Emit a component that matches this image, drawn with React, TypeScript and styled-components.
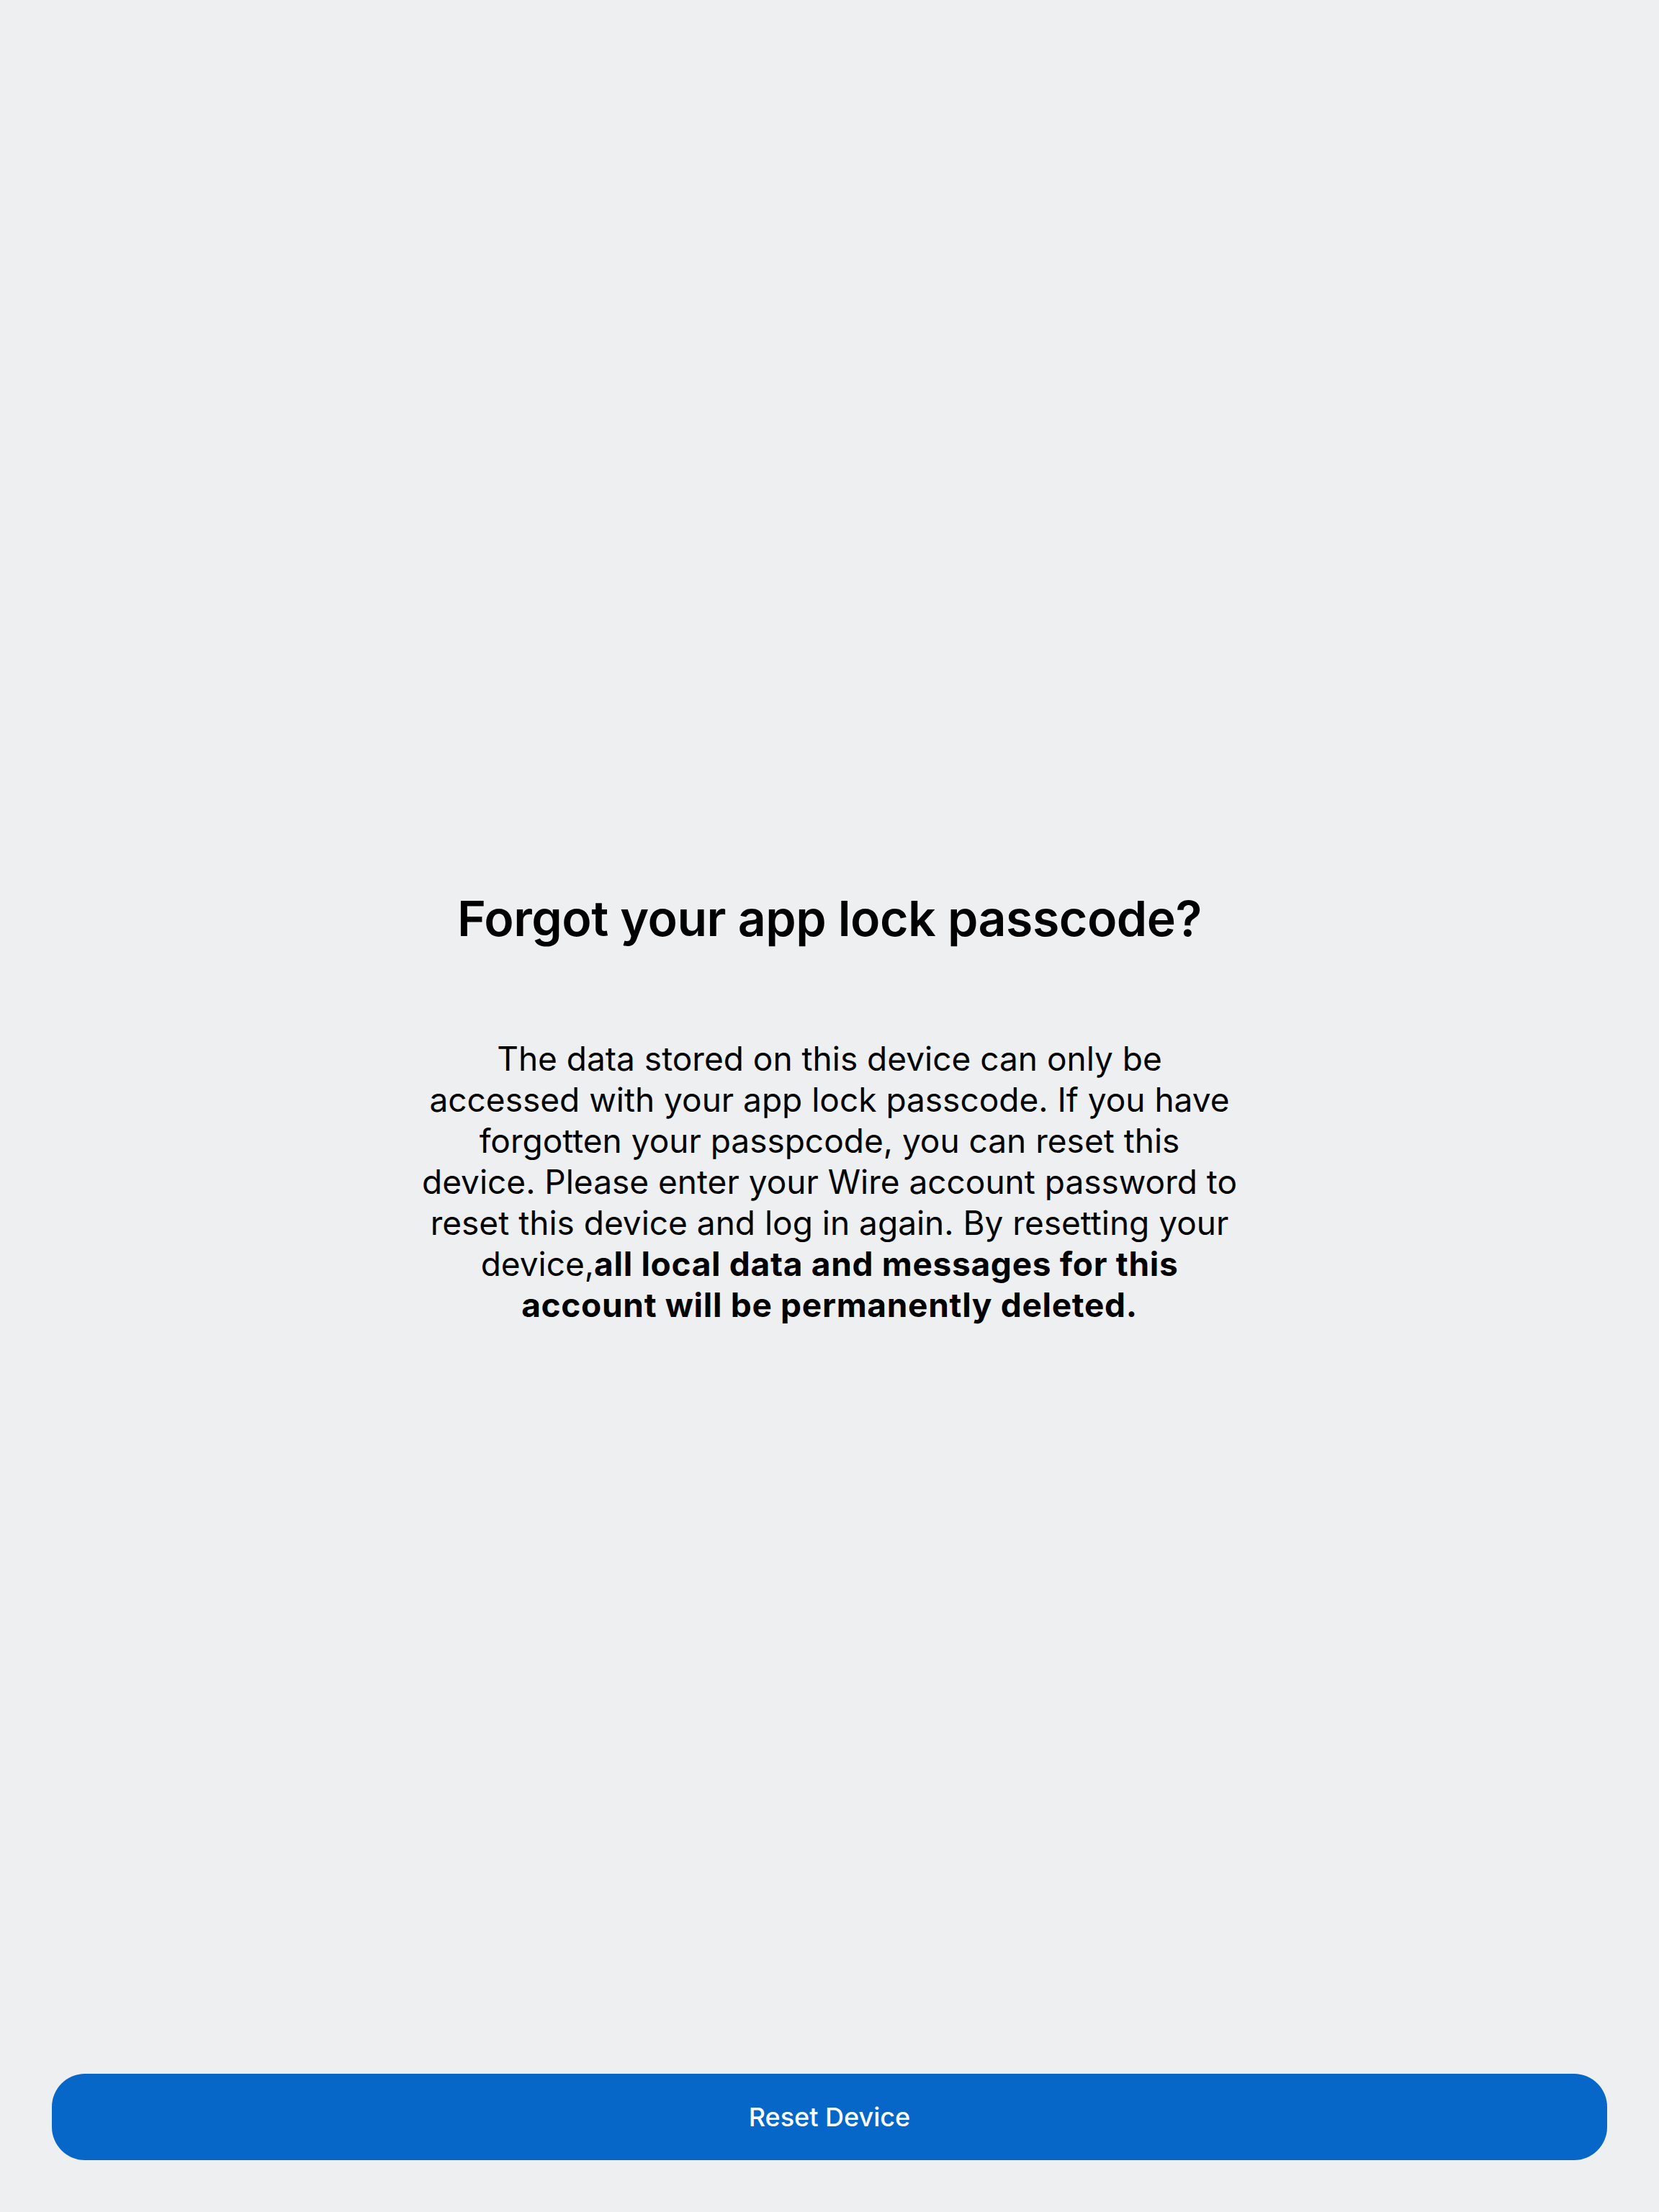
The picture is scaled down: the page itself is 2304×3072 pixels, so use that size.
import React from "react";
import styled, { createGlobalStyle } from "styled-components";

const GlobalStyle = createGlobalStyle`
  html, body {
    margin: 0;
    padding: 0;
    background: #eeeff1;
  }
  * {
    box-sizing: border-box;
  }
`;

const Screen = styled.div`
  min-height: 3072px;
  display: flex;
  flex-direction: column;
  background: #eeeff1;
  font-family: Inter, "Noto Sans", sans-serif;
  color: #000;
`;

const Content = styled.main`
  flex: 1;
  display: flex;
  flex-direction: column;
  align-items: center;
  padding-top: 1233px;
`;

const Title = styled.h1`
  margin: 0;
  font-size: 68px;
  line-height: 84px;
  font-weight: 600;
  letter-spacing: -0.5px;
  text-align: center;
`;

const Message = styled.p`
  margin: 125px 0 0;
  max-width: 1136px;
  font-size: 46px;
  line-height: 57px;
  font-weight: 400;
  text-align: center;
`;

const Strong = styled.strong`
  font-weight: 700;
  letter-spacing: 0.7px;
`;

const Footer = styled.footer`
  padding: 0 72px 72px;
`;

const ResetButton = styled.button`
  width: 100%;
  height: 120px;
  border: none;
  border-radius: 46px;
  background: #0667c8;
  color: #fff;
  font-family: Inter, "Noto Sans", sans-serif;
  font-size: 36px;
  font-weight: 500;
  cursor: pointer;
`;

export default function App() {
  return (
    <Screen>
      <GlobalStyle />
      <Content>
        <Title>Forgot your app lock passcode?</Title>
        <Message>
          The data stored on this device can only be accessed with your app lock
          passcode. If you have forgotten your passpcode, you can reset this
          device. Please enter your Wire account password to reset this device
          and log in again. By resetting your device,
          <Strong>all local data and messages for this account will be permanently deleted.</Strong>
        </Message>
      </Content>
      <Footer>
        <ResetButton>Reset Device</ResetButton>
      </Footer>
    </Screen>
  );
}
